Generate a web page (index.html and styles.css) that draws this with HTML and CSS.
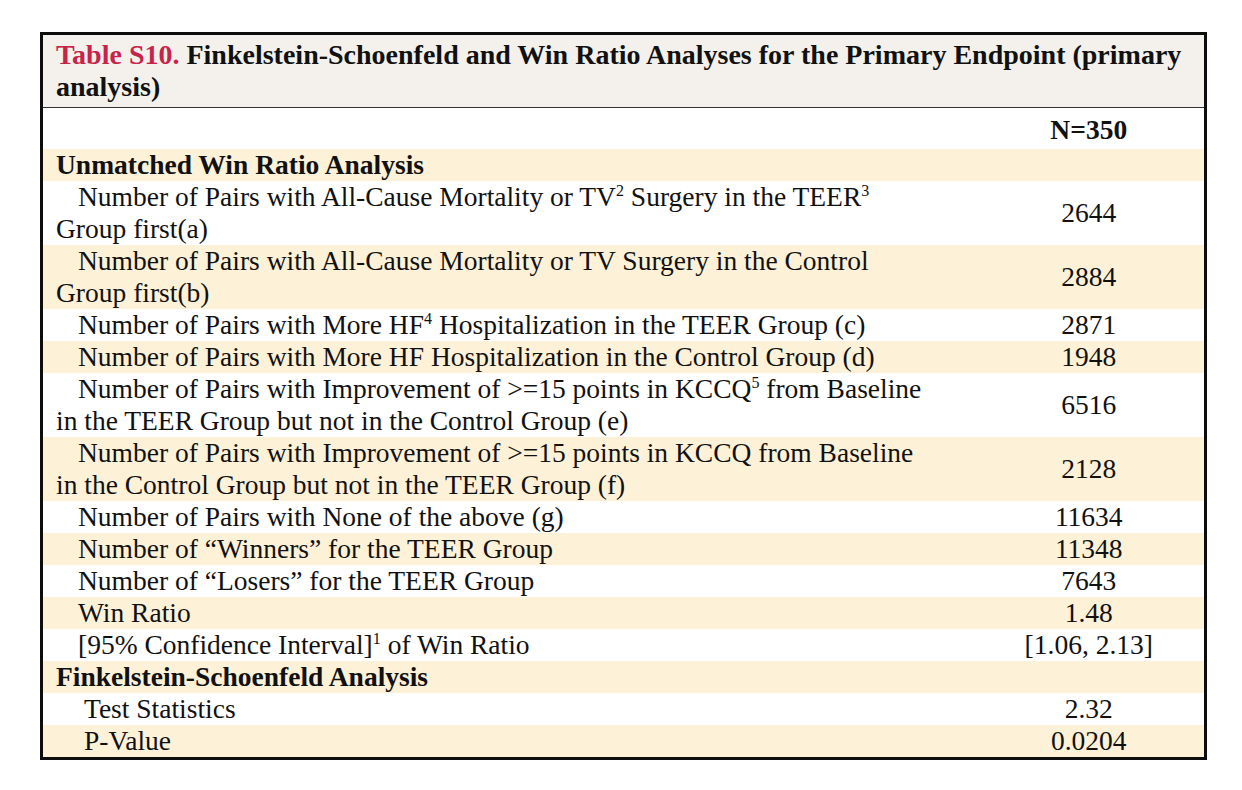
FILE: index.html
```html
<!DOCTYPE html>
<html lang="en">
<head>
<meta charset="utf-8">
<title>Table S10</title>
<link rel="stylesheet" href="styles.css">
</head>
<body>
<table class="tbl">
  <colgroup>
    <col class="c-lab">
    <col class="c-val">
  </colgroup>
  <thead>
    <tr>
      <th class="title" colspan="2"><span class="tag">Table S10.</span> Finkelstein-Schoenfeld and Win Ratio Analyses for the Primary Endpoint (primary<br>analysis)</th>
    </tr>
    <tr class="white">
      <th class="lab"></th>
      <th class="val nhead">N=350</th>
    </tr>
  </thead>
  <tbody>
    <tr class="cream"><td class="lab sec">Unmatched Win Ratio Analysis</td><td class="val"></td></tr>
    <tr class="white two"><td class="lab ind">Number of Pairs with All-Cause Mortality or TV<sup>2</sup> Surgery in the TEER<sup>3</sup><br>Group first(a)</td><td class="val">2644</td></tr>
    <tr class="cream two"><td class="lab ind">Number of Pairs with All-Cause Mortality or TV Surgery in the Control<br>Group first(b)</td><td class="val">2884</td></tr>
    <tr class="white"><td class="lab ind">Number of Pairs with More HF<sup>4</sup> Hospitalization in the TEER Group (c)</td><td class="val">2871</td></tr>
    <tr class="cream"><td class="lab ind">Number of Pairs with More HF Hospitalization in the Control Group (d)</td><td class="val">1948</td></tr>
    <tr class="white two"><td class="lab ind">Number of Pairs with Improvement of &gt;=15 points in KCCQ<sup>5</sup> from Baseline<br>in the TEER Group but not in the Control Group (e)</td><td class="val">6516</td></tr>
    <tr class="cream two"><td class="lab ind">Number of Pairs with Improvement of &gt;=15 points in KCCQ from Baseline<br>in the Control Group but not in the TEER Group (f)</td><td class="val">2128</td></tr>
    <tr class="white"><td class="lab ind">Number of Pairs with None of the above (g)</td><td class="val">11634</td></tr>
    <tr class="cream"><td class="lab ind">Number of “Winners” for the TEER Group</td><td class="val">11348</td></tr>
    <tr class="white"><td class="lab ind">Number of “Losers” for the TEER Group</td><td class="val">7643</td></tr>
    <tr class="cream"><td class="lab ind">Win Ratio</td><td class="val">1.48</td></tr>
    <tr class="white"><td class="lab ind">[95% Confidence Interval]<sup>1</sup> of Win Ratio</td><td class="val">[1.06, 2.13]</td></tr>
    <tr class="cream"><td class="lab sec">Finkelstein-Schoenfeld Analysis</td><td class="val"></td></tr>
    <tr class="white"><td class="lab ind2">Test Statistics</td><td class="val">2.32</td></tr>
    <tr class="cream"><td class="lab ind2">P-Value</td><td class="val">0.0204</td></tr>
  </tbody>
</table>
</body>
</html>
```
FILE: styles.css
```css
html, body {
  margin: 0;
  padding: 0;
  background: #ffffff;
}
body {
  padding: 32px 0 0 40px;
  font-family: "Liberation Serif", "Times New Roman", serif;
  color: #111111;
}
.tbl {
  width: 1164px;
  border-collapse: collapse;
  border: 3px solid #0d0d0d;
  font-size: 27.5px;
  line-height: 32px;
  table-layout: fixed;
}
.c-lab {
  width: 932px;
}
.c-val {
  width: 232px;
}
.tbl th, .tbl td {
  padding: 0;
  vertical-align: middle;
  white-space: nowrap;
}
.title {
  background: #f4f1ec;
  text-align: left;
  font-weight: bold;
  font-size: 28px;
  padding: 4px 4px 4px 13px !important;
  border-bottom: 1px solid #333;
  color: #111111;
}
.tag {
  color: #c8234a;
}
.white {
  background: #ffffff;
}
.cream {
  background: #fdf1d8;
}
.lab {
  text-align: left;
  padding-left: 13px !important;
  height: 32px;
}
.val {
  text-align: center;
}
.nhead {
  font-weight: bold;
  height: 39px;
  padding-top: 2px !important;
}
.sec {
  font-weight: bold;
}
.ind {
  text-indent: 22px;
}
.ind2 {
  text-indent: 28px;
}
.two .lab {
  height: 64px;
}
sup {
  font-size: 16px;
  line-height: 0;
  vertical-align: 10px;
}
```
